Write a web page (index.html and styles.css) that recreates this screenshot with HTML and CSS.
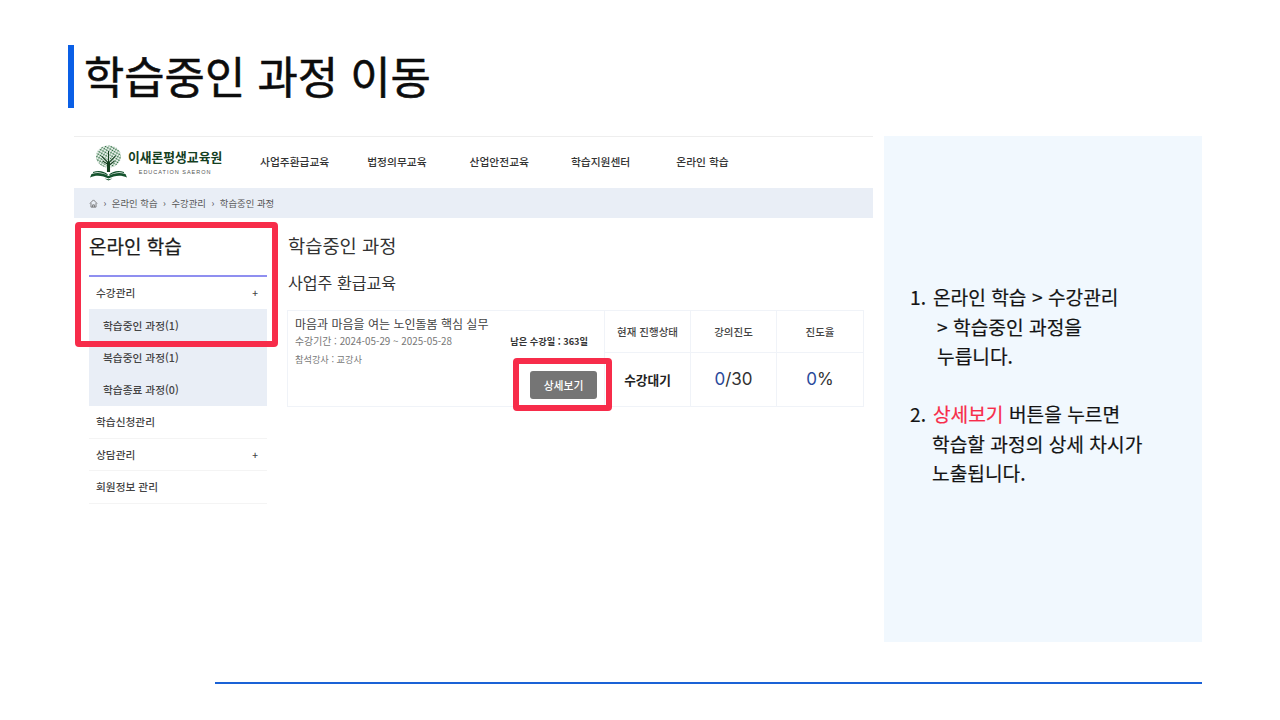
FILE: index.html
```html
<!DOCTYPE html>
<html lang="ko">
<head>
<meta charset="utf-8">
<title>학습중인 과정 이동</title>
<link rel="stylesheet" href="styles.css">
</head>
<body>
<div class="slide">
  <header class="slide-head"><h1>학습중인 과정 이동</h1></header>
  <main class="slide-main">
    <section class="shot">
      <div class="topnav">
        <div class="logo">
          <svg class="logo-mark" width="38" height="36" viewBox="0 0 38 36">
            <defs>
              <pattern id="leaf" width="2.600" height="2.600" patternUnits="userSpaceOnUse" patternTransform="rotate(30)">
                <circle cx="1.300" cy="1.300" r=".95" fill="#1f6634"/>
              </pattern>
            </defs>
            <ellipse cx="18.500" cy="11.500" rx="12.500" ry="11" fill="url(#leaf)"/>
            <path d="M17.500 27V17l-6-6M17.500 19l-5-3M19.500 27V17l6-6M19.500 20l5-4M18.500 27V6" fill="none" stroke="#fff" stroke-width="2.200" opacity=".75"/>
            <path d="M17.500 27V17l-6-6M17.500 19l-5-3M19.500 27V17l6-6M19.500 20l5-4M18.500 27V6" fill="none" stroke="#14401f" stroke-width="1.100"/>
            <path d="M0 32.500c6-3 13-2 18.500 1 5.500-3 12.500-4 18.500-1l-1.500-3.500c-6-2-12-1-17 2-5-3-11-4-17-2zM3 27c5.500-2 11-1 15 2.500l-1 .5c-4-2.500-9.500-3.500-14-2zM34 27c-5.500-2-11-1-15 2.500l1 .5c4-2.500 9.500-3.500 14-2zM14.500 33.500l4 2 4-2-4 .8z" fill="#14532d"/>
          </svg>
          <div class="logo-text">
            <div class="logo-name">이새론평생교육원</div>
            <div class="logo-sub">EDUCATION SAERON</div>
          </div>
        </div>
        <nav class="menu">
          <a class="m1">사업주환급교육</a>
          <a class="m2">법정의무교육</a>
          <a class="m3">산업안전교육</a>
          <a class="m4">학습지원센터</a>
          <a class="m5">온라인 학습</a>
        </nav>
      </div>
      <div class="crumb">
        <svg class="home" width="9" height="9" viewBox="0 0 10 10"><path d="M1 5l4-4 4 4M2.200 4.500V9h5.600V4.500M4 9V6.500h2V9" fill="none" stroke="#666" stroke-width=".9"/></svg>
        <span>›</span><span>온라인 학습</span><span>›</span><span>수강관리</span><span>›</span><span>학습중인 과정</span>
      </div>
      <div class="content">
        <aside class="side">
          <h2>온라인 학습</h2>
          <div class="side-row first"><span>수강관리</span><b>+</b></div>
          <div class="sub">
            <div>학습중인 과정(1)</div>
            <div>복습중인 과정(1)</div>
            <div>학습종료 과정(0)</div>
          </div>
          <div class="side-row"><span>학습신청관리</span></div>
          <div class="side-row"><span>상담관리</span><b>+</b></div>
          <div class="side-row"><span>회원정보 관리</span></div>
        </aside>
        <div class="course">
          <h3>학습중인 과정</h3>
          <h4>사업주 환급교육</h4>
          <div class="card">
            <div class="info">
              <div class="c-title">마음과 마음을 여는 노인돌봄 핵심 실무</div>
              <div class="c-date">수강기간 : 2024-05-29 ~ 2025-05-28</div>
              <div class="c-left">남은 수강일 : 363일</div>
              <div class="c-teacher">참석강사 : 교강사</div>
              <button class="detail">상세보기</button>
            </div>
            <div class="cell head">현재 진행상태</div>
            <div class="cell head">강의진도</div>
            <div class="cell head last">진도율</div>
            <div class="cell val strong">수강대기</div>
            <div class="cell val"><span><i>0</i>/30</span></div>
            <div class="cell val last"><span><i>0</i>%</span></div>
          </div>
        </div>
      </div>
      <div class="mark mark-a"></div>
      <div class="mark mark-b"></div>
    </section>
    <aside class="guide">
      <p class="lead"><span class="num">1.</span> 온라인 학습 &gt; 수강관리</p>
      <p class="in1">&gt; 학습중인 과정을</p>
      <p class="in1">누릅니다.</p>
      <p class="gap"><span class="num">2.</span> <em>상세보기</em> 버튼을 누르면</p>
      <p class="in2">학습할 과정의 상세 차시가</p>
      <p class="in2">노출됩니다.</p>
    </aside>
  </main>
  <div class="foot-line"></div>
</div>
</body>
</html>
```
FILE: styles.css
```css
* { box-sizing: border-box; }
html, body { margin: 0; padding: 0; background: #fff; }
body { font-family: "Noto Sans CJK KR", "Noto Sans", sans-serif; color: #222; }
.slide { width: 1280px; height: 720px; overflow: hidden; padding-top: 45px; }

.slide-head { margin-left: 68px; height: 63px; border-left: 6px solid #0a5fe6; padding-left: 11px; display: flex; align-items: center; }
.slide-head h1 { margin: 0; font-size: 43.800px; font-weight: 400; line-height: 62px; color: #0c0c0c; -webkit-text-stroke: .55px #0c0c0c; position: relative; top: -2px; left: -1px; }

.slide-main { display: flex; margin: 28px 0 0 74px; gap: 11px; height: 506px; }

.shot { width: 799px; position: relative; border-top: 1px solid #eee; }
.topnav { height: 51px; display: flex; align-items: center; }
.logo { display: flex; align-items: center; margin-left: 16px; width: 170px; }
.logo-mark { flex: none; }
.logo-text { display: flex; flex-direction: column; align-items: center; }
.logo-name { font-size: 12.800px; font-weight: 700; color: #14401f; line-height: 15px; }
.logo-sub { font-size: 5.500px; letter-spacing: 1px; color: #555; line-height: 9px; margin-top: 4px; font-family: "Liberation Sans", sans-serif; }
.menu { display: flex; font-size: 10.750px; color: #333; font-weight: 500; margin-top: -2px; }
.menu a { display: block; white-space: nowrap; }
.m2 { margin-left: 38px; }
.m3 { margin-left: 43px; }
.m4 { margin-left: 42px; }
.m5 { margin-left: 46px; }

.crumb { height: 30px; background: #e9eef6; display: flex; align-items: center; padding-left: 15px; gap: 5.500px; font-size: 9.400px; color: #555; }
.home { flex: none; }

.content { display: flex; padding-left: 15px; }
.side { width: 178px; }
.side h2 { margin: 0; height: 59px; padding-top: 14px; font-size: 19px; line-height: 28px; font-weight: 400; color: #1c1c1c; -webkit-text-stroke: .25px #1c1c1c; border-bottom: 2px solid #8f8ff0; }
.side-row { height: 32.500px; display: flex; justify-content: space-between; align-items: center; padding: 0 9px 0 7px; font-size: 10.700px; color: #444; font-weight: 500; border-bottom: 1px solid #f4f4f4; }
.side-row.first { border-bottom: 0; height: 32px; padding-bottom: 2px; }
.side-row b { font-weight: 500; font-size: 10px; color: #444; }
.sub { background: #e9eef6; height: 97px; }
.sub div { height: 32.300px; display: flex; align-items: center; padding-left: 14px; font-size: 10.700px; color: #444; font-weight: 500; }

.course { margin-left: 20px; width: 577px; }
.course h3 { margin: 0; padding: 13px 0 0 1px; font-size: 18.700px; line-height: 28px; font-weight: 400; color: #333; }
.course h4 { margin: 11px 0 0; padding-left: 1px; font-size: 16.100px; line-height: 24px; font-weight: 400; color: #333; }
.card { margin-top: 16px; display: grid; grid-template-columns: 317px 86px 86px 86px; grid-template-rows: 42px 54px; border: 1px solid #f0f3f8; width: 577px; height: 97px; }
.info { grid-row: 1 / 3; position: relative; padding: 4px 7px; border-right: 1px solid #f0f3f8; }
.c-title { font-size: 12px; line-height: 17px; color: #444; }
.c-date { font-size: 9.900px; line-height: 14px; color: #777; margin-top: 2px; }
.c-left { position: absolute; right: 16px; top: 23px; font-size: 9.200px; line-height: 14px; font-weight: 700; color: #333; }
.c-teacher { font-size: 9.200px; line-height: 14px; color: #777; margin-top: 4px; }
.detail { position: absolute; left: 242px; top: 60px; width: 67px; height: 28px; border: 0; border-radius: 3px; background: #757575; color: #fff; font: 500 10.800px "Noto Sans CJK KR", sans-serif; padding: 0; }
.cell { display: flex; align-items: center; justify-content: center; border-right: 1px solid #f0f3f8; }
.cell.last { border-right: 0; }
.cell.head { font-size: 10.500px; color: #444; font-weight: 500; border-bottom: 1px solid #f0f3f8; }
.cell.val { font-size: 17px; font-family: Inter, "Noto Sans CJK KR", sans-serif; color: #333; padding-bottom: 3px; }
.cell.val.strong { font-family: "Noto Sans CJK KR", sans-serif; font-size: 12.700px; font-weight: 700; color: #222; padding-bottom: 1px; }
.cell.val i { font-style: normal; color: #2a4a9c; }

.mark { position: absolute; border: 6px solid #f72c4a; border-radius: 4px; }
.mark-a { left: 1px; top: 85px; width: 203px; height: 125px; }
.mark-b { left: 439px; top: 221px; width: 99px; height: 53px; }

.guide { width: 318px; background: #f1f8fe; padding: 147px 0 0 26px; }
.guide p { margin: 0; font-size: 19.200px; line-height: 29.500px; color: #141414; -webkit-text-stroke: .2px #141414; white-space: nowrap; }
.guide .num { margin-right: 1.500px; }
.guide .in1 { padding-left: 27px; }
.guide .in2 { padding-left: 22px; }
.guide .gap { margin-top: 28.500px; }
.guide em { font-style: normal; color: #f72c4a; -webkit-text-stroke: .2px #f72c4a; }

.foot-line { margin: 40px 0 0 215px; width: 987px; height: 2px; background: #1a62d6; }
```
